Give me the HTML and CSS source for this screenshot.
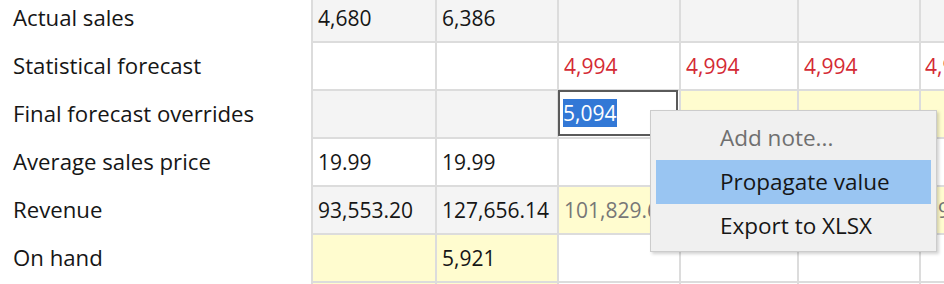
FILE: index.html
```html
<!DOCTYPE html>
<html>
<head>
<meta charset="utf-8">
<link rel="stylesheet" href="styles.css">
</head>
<body>
<div class="frame">
<div class="sheet">
  <div class="labels">
    <div class="label">Actual sales</div>
    <div class="label">Statistical forecast</div>
    <div class="label">Final forecast overrides</div>
    <div class="label">Average sales price</div>
    <div class="label">Revenue</div>
    <div class="label">On hand</div>
    <div class="label"></div>
  </div>
  <div class="grid">
    <!-- row 1 -->
    <div class="c gray">4,680</div>
    <div class="c gray">6,386</div>
    <div class="c gray"></div>
    <div class="c gray"></div>
    <div class="c gray"></div>
    <div class="c gray"></div>
    <!-- row 2 -->
    <div class="c"></div>
    <div class="c"></div>
    <div class="c red">4,994</div>
    <div class="c red">4,994</div>
    <div class="c red">4,994</div>
    <div class="c red">4,994</div>
    <!-- row 3 -->
    <div class="c gray"></div>
    <div class="c gray"></div>
    <div class="c edit"><div class="editor"><span class="sel">5,094</span></div></div>
    <div class="c yellow"></div>
    <div class="c yellow"></div>
    <div class="c yellow"></div>
    <!-- row 4 -->
    <div class="c">19.99</div>
    <div class="c">19.99</div>
    <div class="c"></div>
    <div class="c"></div>
    <div class="c"></div>
    <div class="c"></div>
    <!-- row 5 -->
    <div class="c gray">93,553.20</div>
    <div class="c gray">127,656.14</div>
    <div class="c yellow dim">101,829.60</div>
    <div class="c yellow dim"></div>
    <div class="c yellow dim"></div>
    <div class="c yellow dim">9</div>
    <!-- row 6 -->
    <div class="c yellow"></div>
    <div class="c yellow">5,921</div>
    <div class="c"></div>
    <div class="c"></div>
    <div class="c"></div>
    <div class="c"></div>
    <!-- row 7 -->
    <div class="c yellow"></div>
    <div class="c yellow"></div>
    <div class="c"></div>
    <div class="c"></div>
    <div class="c"></div>
    <div class="c"></div>
  </div>
</div>
</div>
<div class="menu">
  <div class="item disabled">Add note...</div>
  <div class="item hover">Propagate value</div>
  <div class="item">Export to XLSX</div>
</div>
</body>
</html>
```
FILE: styles.css
```css
html, body {
  margin: 0;
  padding: 0;
  background: #ffffff;
  overflow: hidden;
}
body {
  width: 944px;
  height: 284px;
  position: relative;
  font-family: "Open Sans", "Noto Sans", sans-serif;
  font-size: 21px;
  color: #161616;
}
.frame {
  width: 944px;
  height: 284px;
  overflow: hidden;
}
.sheet {
  display: flex;
  margin-top: -5px;
}
.labels {
  width: 311px;
  flex: none;
  border-right: 2px solid #dcdcdc;
  background: #fff;
}
.label {
  height: 48px;
  line-height: 46px;
  padding-left: 13px;
  box-sizing: border-box;
  white-space: nowrap;
  font-size: 22.2px;
}
.grid {
  display: grid;
  grid-template-columns: 122px 120px 120px 116px 120px 120px;
  grid-auto-rows: 46px;
  gap: 2px;
  background: #dcdcdc;
  flex: none;
}
.c {
  background: #ffffff;
  line-height: 46px;
  padding-left: 5px;
  white-space: nowrap;
  overflow: hidden;
}
.gray { background: #f4f4f4; }
.yellow { background: #fffccf; }
.red { color: #d42a35; }
.dim { color: #777777; }
.c:last-child, .c:nth-child(6n) { padding-left: 4px; }
.c.dim:nth-child(6n) { padding-left: 17px; }
.edit {
  padding: 0;
  overflow: visible;
  position: relative;
}
.editor {
  position: absolute;
  left: -1px;
  top: -1px;
  width: 120px;
  height: 46px;
  box-sizing: border-box;
  border: 2px solid #5a5a5a;
  background: #fff;
  padding-left: 3px;
  line-height: 42px;
}
.sel {
  background: #3278d6;
  color: #ffffff;
  display: inline-block;
  line-height: 28px;
  padding: 0 1px 0 0;
}
.menu {
  position: absolute;
  left: 650px;
  top: 110px;
  width: 287px;
  height: 142px;
  box-sizing: border-box;
  background: #f0f0f0;
  border: 1px solid #cccccc;
  box-shadow: 2px 2px 3px rgba(0,0,0,0.18);
  padding: 5px 5px 0 5px;
}
.item {
  height: 44px;
  line-height: 44px;
  padding-left: 64px;
  font-size: 22.5px;
  color: #161616;
}
.item.disabled { color: #6f6f6f; }
.item.hover { background: #99c5f2; }
```
